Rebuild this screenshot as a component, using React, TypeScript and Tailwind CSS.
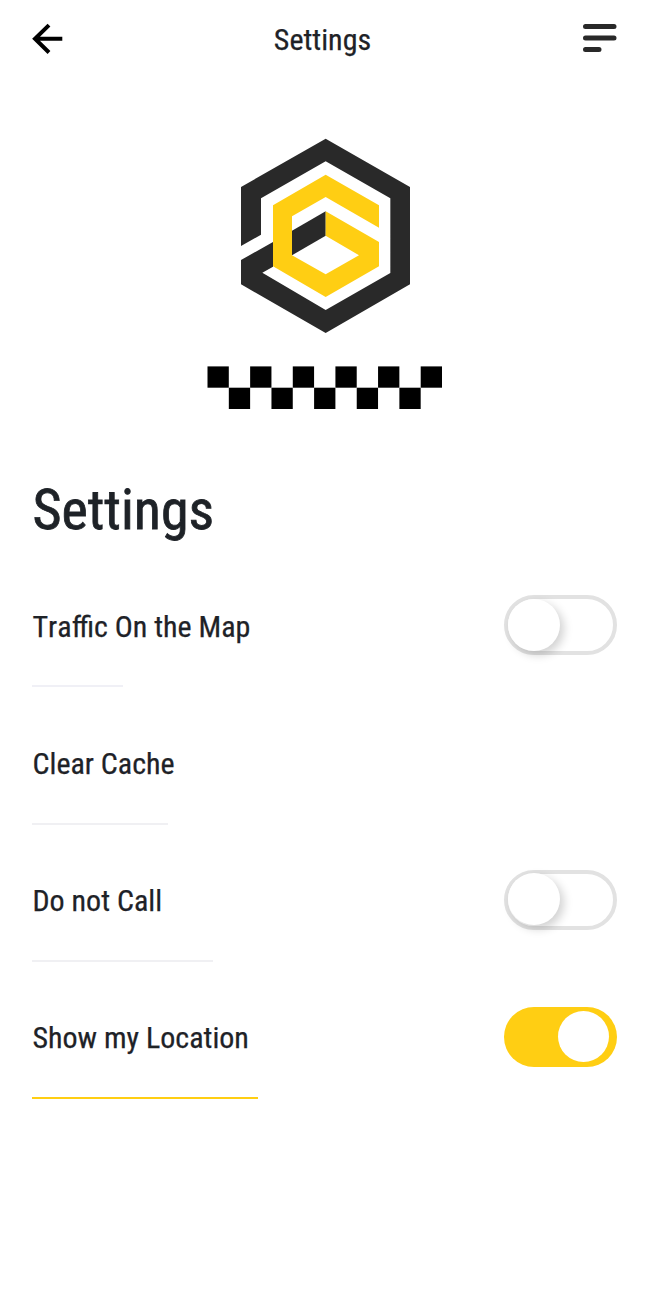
type Item = { label: string; control?: "on" | "off"; line: string; text?: string };

const items: Item[] = [
  { label: "Traffic On the Map", control: "off", line: "w-[91px] bg-[#f0f0f6]", text: "[font-kerning:none]" },
  { label: "Clear Cache", line: "w-[136px] bg-[#f0f0f3]" },
  { label: "Do not Call", control: "off", line: "w-[181px] bg-[#f0f0f3]" },
  { label: "Show my Location", control: "on", line: "w-[226px] bg-[#ffce13]" },
];

function Toggle({ on }: { on: boolean }) {
  return on ? (
    <button
      role="switch"
      aria-checked="true"
      className="flex h-[60px] w-[113px] items-center justify-end rounded-full bg-[#ffce13] pr-[8px] pb-[2px]"
    >
      <span className="size-[51px] rounded-full bg-white" />
    </button>
  ) : (
    <button
      role="switch"
      aria-checked="false"
      className="flex h-[60px] w-[113px] items-center rounded-full border-4 border-[#e2e2e2] pb-[1px]"
    >
      <span className="size-[52px] rounded-full bg-white shadow-[4px_4px_10px_rgba(0,0,0,0.18)]" />
    </button>
  );
}

function Logo() {
  return (
    <svg viewBox="0 0 570 630" className="h-[210px] w-[190px]">
      <g fill="#292929">
        <path d="M287 26L540 171V463L287 609L33 463V390L129 336V410L97 428L287 540L481 429V205L287 94L93 205V314L33 348V171Z" />
        <path d="M186 302L287 244V317L186 376Z" />
      </g>
      <path
        fill="#ffce13"
        d="M287 134L447 226V293L287 201L186 259V376L287 433L387 376L287 317V244L447 336V409L287 501L129 409V226Z"
      />
    </svg>
  );
}

function Checkers() {
  return (
    <svg viewBox="0 0 235 43" className="h-[43px] w-[235px]">
      {Array.from({ length: 11 }, (_, i) => (
        <rect key={i} x={0.5 + i * 21.32} y={i % 2 ? 21.7 : 0.4} width="21.3" height="21.3" />
      ))}
    </svg>
  );
}

export default function App() {
  return (
    <main className="flex h-[1308px] w-[656px] flex-col bg-white font-['Roboto_Condensed','Roboto',sans-serif] text-[#1e2227] [font-stretch:condensed]">
      <header className="flex h-[78px] items-center justify-between pr-[39px] pl-[32px]">
        <svg viewBox="0 0 32 32" className="h-8 w-8" fill="none" stroke="#000" strokeWidth="4">
          <path d="M30.3 15.8H3M17 2.1L3 15.8L17 29.5" />
        </svg>
        <span className="pt-[2px] pr-[2px] text-[30px] leading-[36px] [-webkit-text-stroke:0.25px]">Settings</span>
        <svg viewBox="0 0 34 30" className="h-[30px] w-[34px]" fill="none" stroke="#292929" strokeWidth="5" strokeLinecap="round">
          <path d="M2.5 2.5H31M2.5 14H31M2.5 25.5H16" />
        </svg>
      </header>
      <section className="flex flex-col items-center pt-[52px] pr-[6px]">
        <Logo />
        <div className="pt-[26px] pr-[2px]">
          <Checkers />
        </div>
      </section>
      <h1 className="mt-[69px] pl-[32.5px] text-[56px] leading-[64px] [-webkit-text-stroke:0.8px]">Settings</h1>
      <ul className="mt-[53.45px] flex flex-col pr-[39px] pl-[32px]">
        {items.map((item) => (
          <li key={item.label} className="flex h-[137.2px] flex-col">
            <div className="flex h-[60px] items-center justify-between">
              <span className={"pt-[2.7px] pl-[0.5px] text-[30px] leading-[36px] [-webkit-text-stroke:0.25px] " + (item.text ?? "")}>
                {item.label}
              </span>
              {item.control && <Toggle on={item.control === "on"} />}
            </div>
            <div className={"mt-[29.9px] h-[2px] " + item.line} />
          </li>
        ))}
      </ul>
    </main>
  );
}
